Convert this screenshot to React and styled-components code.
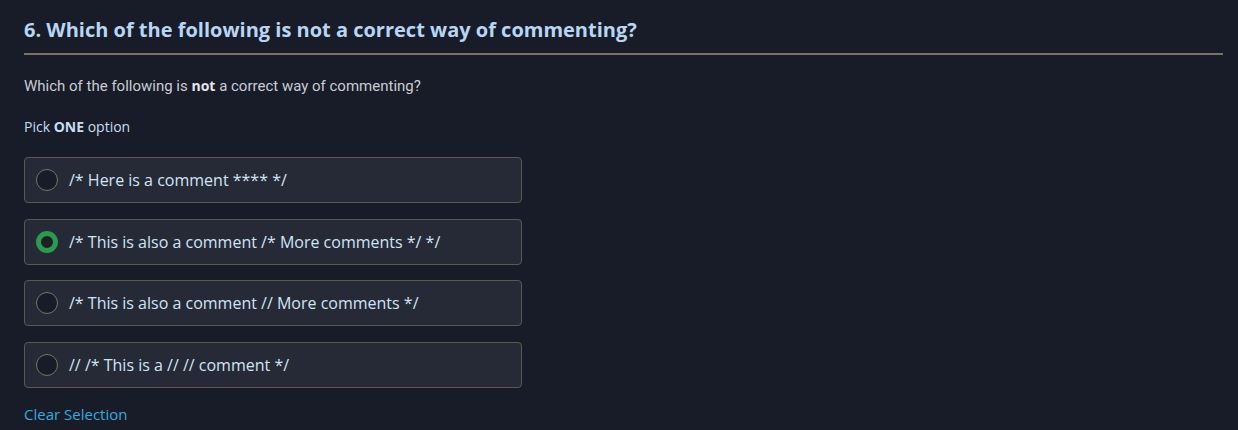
import React, { useState } from 'react'
import styled, { createGlobalStyle } from 'styled-components'

const GlobalStyle = createGlobalStyle`
    html, body {
        margin: 0;
        background: #181c28;
    }
    body {
        font-family: "Open Sans", "Liberation Sans", sans-serif;
    }
`

const Page = styled.div`
    padding: 16px 15px 0 24px;
    min-height: 430px;
    box-sizing: border-box;
    background: #181c28;
`

const Title = styled.h2`
    margin: 0;
    padding-bottom: 9px;
    font-size: 20px;
    line-height: 28px;
    font-weight: 700;
    color: #b8d6f4;
    border-bottom: 2px solid #7b7263;
`

const Prompt = styled.p`
    margin: 21px 0 0;
    font-family: Roboto, "Open Sans", sans-serif;
    font-size: 15px;
    line-height: 20px;
    color: #c9cdd3;
    strong {
        font-family: "Open Sans", sans-serif;
        font-size: 14px;
        font-weight: 700;
        color: #e4e6ea;
    }
`

const Hint = styled.p`
    margin: 21px 0 0;
    font-size: 14px;
    line-height: 20px;
    color: #c6def3;
    strong {
        font-weight: 700;
    }
`

const Options = styled.div`
    margin-top: 20px;
    width: 498px;
    display: flex;
    flex-direction: column;
    gap: 15.7px;
`

const Option = styled.label`
    height: 46px;
    box-sizing: border-box;
    display: flex;
    align-items: center;
    gap: 11px;
    padding: 0 11px;
    background: #262a36;
    border: 1px solid #5e584c;
    border-radius: 4px;
    cursor: pointer;
`

const Radio = styled.span`
    width: 22px;
    height: 22px;
    box-sizing: border-box;
    border-radius: 50%;
    flex: none;
    background: ${p => (p.$checked ? '#1d1f25' : '#181c28')};
    border: ${p => (p.$checked ? '5px solid #2b9a4e' : '1.5px solid #7b7263')};
`

const OptionText = styled.span`
    font-size: 16px;
    color: #d0e4f6;
`

const ClearLink = styled.a`
    display: inline-block;
    margin-top: 16px;
    font-size: 15px;
    line-height: 20px;
    color: #3aa8dd;
    cursor: pointer;
`

const choices = [
    '/* Here is a comment **** */',
    '/* This is also a comment /* More comments */ */',
    '/* This is also a comment // More comments */',
    '// /* This is a // // comment */',
]

const App = () => {
    const [picked, setPicked] = useState(1)
    return (
        <>
            <GlobalStyle />
            <Page>
                <Title>6. Which of the following is not a correct way of commenting?</Title>
                <Prompt>Which of the following is <strong>not</strong> a correct way of commenting?</Prompt>
                <Hint>Pick <strong>ONE</strong> option</Hint>
                <Options>
                    {choices.map((c, i) => (
                        <Option key={i} onClick={() => setPicked(i)}>
                            <Radio $checked={picked === i} />
                            <OptionText>{c}</OptionText>
                        </Option>
                    ))}
                </Options>
                <ClearLink onClick={() => setPicked(null)}>Clear Selection</ClearLink>
            </Page>
        </>
    )
}

export default App
